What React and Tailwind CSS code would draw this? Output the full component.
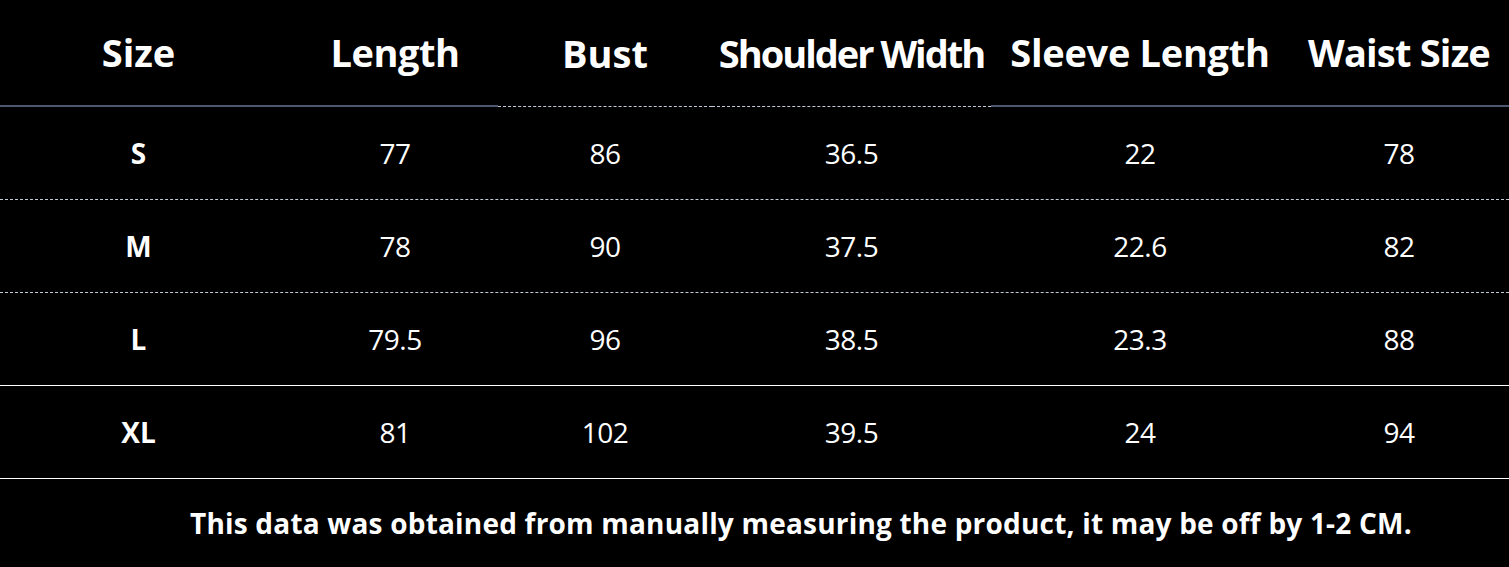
// Size chart: header row + 4 size rows + note under the table
const COLS = ['Size', 'Length', 'Bust', 'Shoulder Width', 'Sleeve Length', 'Waist Size'];

// bordures du header : solide / pointillé selon la colonne (+ petit réglage d'espacement)
const HEAD_CELL = [
  'border-b-2 border-[#4b5870] tracking-[0px]',
  'border-b-2 border-[#4b5870] pl-[15px] tracking-[-0.5px]',
  'border-b border-dashed border-[#c3cad8] tracking-[0px]',
  'border-b border-dashed border-[#c3cad8] tracking-[-2px]',
  'border-b-2 border-[#4b5870] tracking-[-0.3px]',
  'border-b-2 border-[#4b5870] tracking-[-0.8px]',
];

const ROWS = [
  { size: 'S', values: ['77', '86', '36.5', '22', '78'], line: 'border-b border-dashed border-[#c3cad8]' },
  { size: 'M', values: ['78', '90', '37.5', '22.6', '82'], line: 'border-b border-dashed border-[#c3cad8]' },
  { size: 'L', values: ['79.5', '96', '38.5', '23.3', '88'], line: 'border-b border-white' },
  { size: 'XL', values: ['81', '102', '39.5', '24', '94'], line: 'border-b border-white' },
];

const GRID = 'grid grid-cols-[277px_221px_214px_279px_298px_220px]';

export default function App() {
  return (
    <div
      className="w-[1509px] h-[567px] bg-black text-white overflow-hidden"
      style={{ fontFamily: '"Open Sans", "Noto Sans", sans-serif' }}
    >
      {/* header */}
      <div className={GRID}>
        {COLS.map((label, i) => (
          <div
            key={label}
            className={`h-[107px] flex items-center justify-center text-[38px] font-bold ${HEAD_CELL[i]}`}
          >
            {label}
          </div>
        ))}
      </div>

      {/* lignes de tailles */}
      {ROWS.map((row) => (
        <div key={row.size} className={`${GRID} h-[93px] ${row.line}`}>
          <div className="flex items-center justify-center text-[28px] font-bold">
            {row.size}
          </div>
          {row.values.map((v, i) => (
            <div
              key={i}
              className={`flex items-center justify-center text-[28px] tracking-[-0.5px] ${i === 0 ? 'pl-[15px]' : ''}`}
            >
              {v}
            </div>
          ))}
        </div>
      ))}

      {/* note */}
      <div className="h-[87px] flex items-center pl-[190px] text-[28px] font-bold tracking-[0.2px]">
        This data was obtained from manually measuring the product, it may be off by 1-2 CM.
      </div>
    </div>
  );
}
